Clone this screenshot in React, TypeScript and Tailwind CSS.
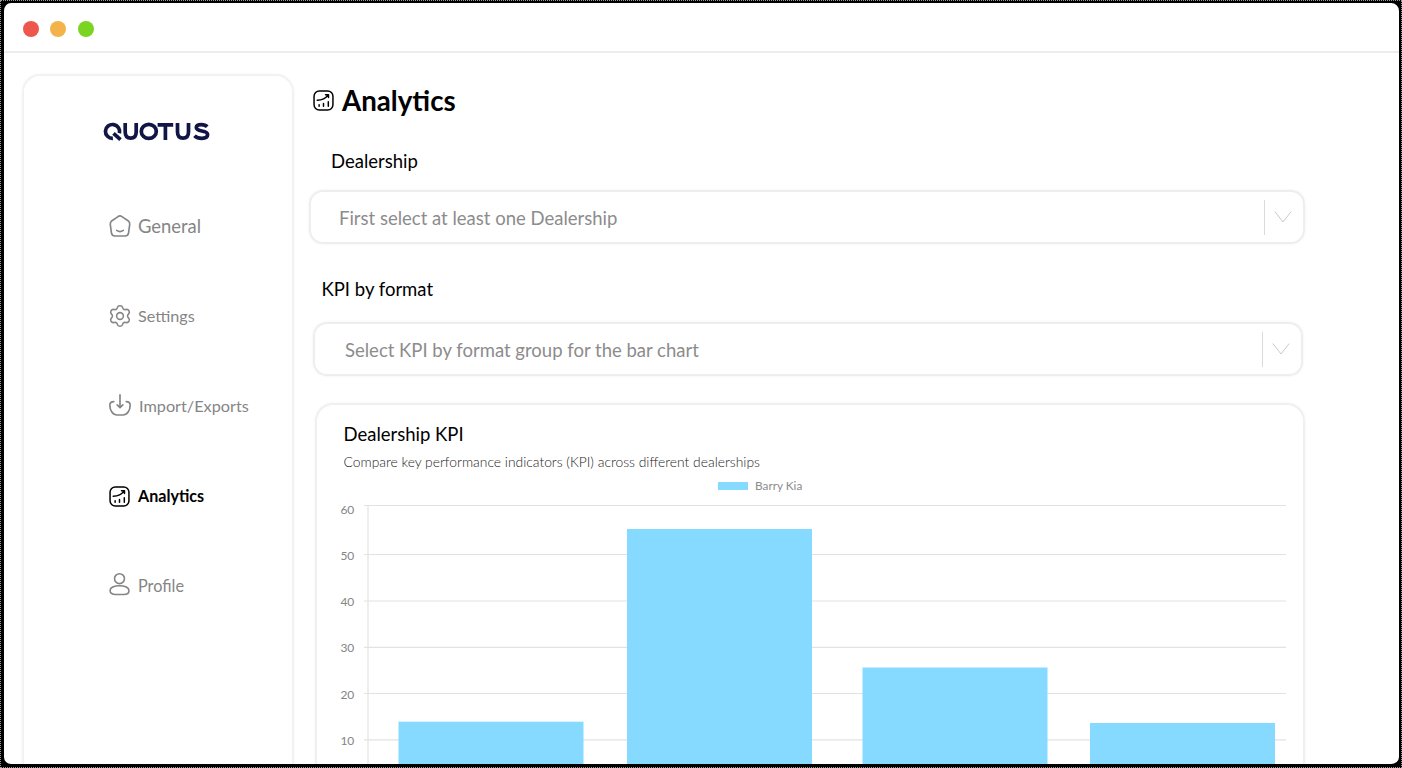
import type { ReactNode } from "react";

type IconProps = { className?: string };

function Svg({ className, children, width = 1.6 }: { className?: string; children: ReactNode; width?: number }) {
  return (
    <svg viewBox="0 0 24 24" fill="none" stroke="currentColor" strokeWidth={width} strokeLinecap="round" strokeLinejoin="round" className={className}>
      {children}
    </svg>
  );
}

function HomeIcon({ className }: IconProps) {
  return (
    <Svg className={className} width={1.8}>
      <path d="M9.900 1.700 3.200 6.300C1.700 7.400 1.200 8.600 1.400 10.300l1.200 9C2.900 21.700 4 22.900 6.300 22.900h11.400c2.300 0 3.400-1.200 3.700-3.600l1.200-9c.2-1.700-.3-2.900-1.800-4l-6.700-4.600c-1.500-1-2.700-1-4.200 0Z" />
      <path d="M8.400 16.800c2 1.400 5.200 1.400 7.200 0" />
    </Svg>
  );
}

function GearIcon({ className }: IconProps) {
  return (
    <Svg className={className} width={1.700}>
      <circle cx="12" cy="12" r="3.700" />
      <path d="M9.100 2.900C9.400 1.500 10.600.9 12 .9s2.600.6 2.900 2c.4 1.800 1.600 2.500 3.400 2 1.500-.4 2.700.1 3.500 1.400.7 1.300.5 2.600-.6 3.600-1.300 1.200-1.300 3 0 4.200 1.100 1 1.300 2.300.6 3.600-.8 1.300-2 1.800-3.500 1.400-1.800-.5-3 .2-3.400 2-.3 1.400-1.500 2-2.900 2s-2.600-.6-2.900-2c-.4-1.800-1.600-2.500-3.400-2-1.500.4-2.700-.1-3.500-1.400-.7-1.300-.5-2.600.6-3.600 1.300-1.200 1.300-3 0-4.200-1.100-1-1.300-2.300-.6-3.600.8-1.300 2-1.800 3.500-1.400 1.800.5 3-.2 3.400-2Z" />
    </Svg>
  );
}

function ImportIcon({ className }: IconProps) {
  return (
    <Svg className={className} width={1.800}>
      <path d="M12 .9v13.700M8.900 11.800l3.100 3.100 3.100-3.100" />
      <path d="M5.200 8.300C2.300 8.400.9 9.600.9 12.100c0 6 3.200 10.800 8 10.800h6.200c4.800 0 8-4.800 8-10.800 0-2.500-1.400-3.700-4.300-3.800" />
    </Svg>
  );
}

function ChartIcon({ className }: IconProps) {
  return (
    <Svg className={className} width={1.700}>
      <rect x="1.200" y="1.200" width="21.600" height="21.600" rx="6" />
      <path d="M7 18.600v-1.800M12 18.600v-3.300M17.500 18.600v-5.300M4.800 11.800c5.700-.2 9.700-2.300 12.600-6.200M14.300 5.300h3.400v3.300" />
    </Svg>
  );
}

function UserIcon({ className }: IconProps) {
  return (
    <svg viewBox="0 0 22 24" fill="none" stroke="currentColor" strokeWidth="1.700" className={className}>
      <circle cx="11" cy="6.400" r="5.200" />
      <path d="M1.100 18.700c0-2.700 4-4.900 9.900-4.900s9.900 2.200 9.900 4.900c0 2.900-2.700 4.300-5.500 4.300H6.600c-2.800 0-5.500-1.400-5.500-4.300Z" />
    </svg>
  );
}

function Logo() {
  return (
    <svg viewBox="0 0 108 20" className="h-5 w-[108px]" fill="none" stroke="#111646" strokeWidth="3.700" role="img" aria-label="Quotus">
      <path d="M9.900 16.300A7.100 6.900 0 1 1 16.400 11.200M10.500 11.300l7 6.300" />
      <path d="M22.200 1v8.700c0 4.200 1.900 6.500 5.500 6.500s5.500-2.300 5.500-6.500V1" />
      <ellipse cx="45.800" cy="9.400" rx="7.500" ry="7" />
      <path d="M54.600 2.800h15.600M62.400 2.800v15.300" />
      <path d="M74.500 1v8.700c0 4.200 1.900 6.500 5.500 6.500s5.500-2.300 5.500-6.500V1" />
      <path d="M104.200 4.700c-1.300-1.400-3.200-2.100-5.800-2.100-3.200 0-5.100 1-5.100 3 0 4.800 11.300 1.900 11.300 7 0 2.500-2.300 3.800-5.800 3.800-3 0-5.500-.9-7.300-2.700" />
    </svg>
  );
}

const nav = [
  { label: "General", Icon: HomeIcon, text: "text-[18.400px] pl-[7px] pt-px", icon: "size-[22px]", active: false },
  { label: "Settings", Icon: GearIcon, text: "text-[16.200px] pl-[7px] pt-px", icon: "size-[22px]", active: false },
  { label: "Import/Exports", Icon: ImportIcon, text: "text-[16.250px] pl-2 pt-px", icon: "size-[22px] -mt-0.5", active: false },
  { label: "Analytics", Icon: ChartIcon, text: "text-[16.100px] pl-2 pt-px font-bold", icon: "size-[21px]", active: true },
  { label: "Profile", Icon: UserIcon, text: "text-[16.300px] pl-2 pt-px", icon: "h-6 w-[21px] -mt-1", active: false },
];

function Sidebar() {
  return (
    <aside className="mt-[21px] ml-[18px] h-[720px] w-[272px] shrink-0 rounded-[18px] border-2 border-[#f2f2f2] pl-[78.500px] pt-[46px] shadow-[0_0_3px_rgba(0,0,0,0.04)]">
      <Logo />
      <nav className="mt-[69px] flex flex-col gap-[60px] pl-[6.500px]">
        {nav.map(({ label, Icon, text, icon, active }) => (
          <a key={label} className={`flex h-[30px] items-center ${active ? "text-black" : "text-[#858585]"}`}>
            <Icon className={`shrink-0 ${icon}`} />
            <span className={`whitespace-nowrap ${text}`}>{label}</span>
          </a>
        ))}
      </nav>
    </aside>
  );
}

function Select({ placeholder, className }: { placeholder: string; className: string }) {
  return (
    <div className={`flex h-[54px] items-center rounded-[14px] border-2 border-[#eeeeee] text-[#8c8c8c] shadow-[0_0_3px_rgba(0,0,0,0.06)] ${className}`}>
      <span className="flex-1 whitespace-nowrap pt-[3px] text-[18.500px]">{placeholder}</span>
      <span className="h-[35px] w-px bg-[#dadada]" />
      <svg viewBox="0 0 18 12" className="mr-[11px] ml-[9px] h-3 w-[18px]" fill="none" stroke="#c9c9c9" strokeWidth="1">
        <path d="m.8.500 8.200 10.500L17.200.500" />
      </svg>
    </div>
  );
}

function Chart() {
  const ticks = [
    { value: 60, y: 0.5, label: 9 },
    { value: 50, y: 49.5, label: 55 },
    { value: 40, y: 96, label: 101 },
    { value: 30, y: 142.3, label: 147.3 },
    { value: 20, y: 188.5, label: 193.5 },
    { value: 10, y: 234.8, label: 240 },
  ];
  const bars = [
    { x: 60.5, y: 216.7 },
    { x: 289, y: 24 },
    { x: 524.5, y: 162.5 },
    { x: 752, y: 218 },
  ];
  return (
    <svg viewBox="0 0 950 264" className="block h-[264px] w-[950px] overflow-visible" fontFamily="Lato, sans-serif">
      <path d="M30 0v264" stroke="#eeeeee" strokeWidth="2" />
      {ticks.map((t) => (
        <g key={t.value}>
          <path d={`M26 ${t.y}H948`} stroke="#e2e2e2" strokeWidth="1.200" />
          <text x="16.300" y={t.label} textAnchor="end" fontSize="12" fill="#858585">{t.value}</text>
        </g>
      ))}
      {bars.map((b) => (
        <rect key={b.x} x={b.x} y={b.y} width="185" height="260" fill="#86daff" />
      ))}
    </svg>
  );
}

export default function App() {
  return (
    <div className="h-[768px] w-[1402px] overflow-hidden border border-dotted border-[#999] bg-black font-[Lato,sans-serif] text-black">
      <div className="h-full overflow-hidden rounded-[10px] border-t-2 border-r-2 border-b-[3px] border-l-[3px] border-black bg-white">
        <header className="flex h-[50px] items-center gap-[11.400px] border-b-2 border-[#ececec] pl-[19px] pt-[3px]">
          <span className="size-4 rounded-full bg-[#ed574c]" />
          <span className="size-4 rounded-full bg-[#f4b34a]" />
          <span className="size-4 rounded-full bg-[#7bd421]" />
        </header>
        <div className="flex">
          <Sidebar />
          <main className="flex w-[1011px] flex-col pl-[15px] pt-[29px]">
            <h1 className="flex h-9 items-center gap-2 pl-1 text-[27.700px] font-bold">
              <ChartIcon className="size-[21px]" />
              <span className="pt-0.5">Analytics</span>
            </h1>
            <label className="mt-[29px] pl-[22px] text-[18.500px] leading-7">Dealership</label>
            <Select placeholder="First select at least one Dealership" className="mt-[15px] w-[996px] pl-7" />
            <label className="mt-[31px] pl-[12.500px] text-[18.500px] leading-7">KPI by format</label>
            <Select placeholder="Select KPI by format group for the bar chart" className="mt-[19px] ml-1 w-[990px] pl-[30px]" />
            <section className="mt-[27px] ml-[6px] h-[400px] w-[990px] rounded-[18px] border-2 border-[#f0f0f0] pl-[21px] pt-[16px] shadow-[0_0_3px_rgba(0,0,0,0.05)]">
              <h2 className="pl-[5.500px] text-[18.500px] leading-[26px]">Dealership KPI</h2>
              <p className="mt-[6px] pl-[5.500px] text-[13.860px] leading-[18px] font-light text-[#222]">
                Compare key performance indicators (KPI) across different dealerships
              </p>
              <div className="mt-[7px] flex h-4 items-center gap-[7px] pl-[380px] text-[11.800px] text-[#8c8c8c]">
                <span className="h-2 w-[30px] bg-[#86daff]" />
                <span>Barry Kia</span>
              </div>
              <div className="mt-[11px]">
                <Chart />
              </div>
            </section>
          </main>
        </div>
      </div>
    </div>
  );
}
